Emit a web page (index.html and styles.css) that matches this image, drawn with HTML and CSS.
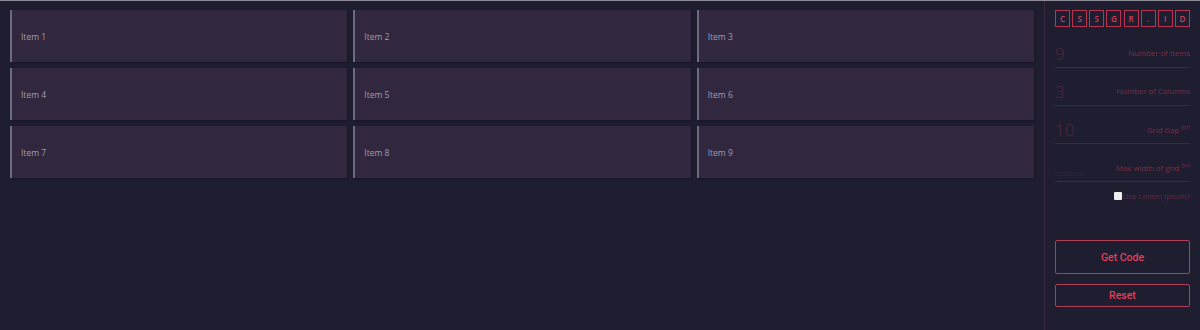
FILE: index.html
```html
<!DOCTYPE html>
<html lang="en">

<head>
    <meta charset="UTF-8">
    <meta name="viewport" content="width=device-width, initial-scale=1.0">
    <title>CSS Grid Generator</title>
    <link rel="stylesheet" href="styles.css">
</head>

<body>
    <div class="app">
        <div class="main">
            <div class="grid">
                <div class="item">Item 1</div>
                <div class="item">Item 2</div>
                <div class="item">Item 3</div>
                <div class="item">Item 4</div>
                <div class="item">Item 5</div>
                <div class="item">Item 6</div>
                <div class="item">Item 7</div>
                <div class="item">Item 8</div>
                <div class="item">Item 9</div>
            </div>
        </div>

        <div class="sidebar">
            <div class="logo">
                <span>C</span><span>S</span><span>S</span><span>G</span><span>R</span><span>.</span><span>I</span><span>D</span>
            </div>

            <div class="field">
                <span class="value">9</span>
                <label>Number of Items</label>
            </div>
            <div class="field">
                <span class="value">3</span>
                <label>Number of Columns</label>
            </div>
            <div class="field">
                <span class="value">10</span>
                <label>Grid Gap <sup>(px)</sup></label>
            </div>
            <div class="field">
                <span class="value placeholder">optional</span>
                <label>Max width of grid <sup>(px)</sup></label>
            </div>

            <div class="check">
                <span class="box"></span>
                <span>Use Lorem Ipsum?</span>
            </div>

            <div class="buttons">
                <button class="btn big">Get Code</button>
                <button class="btn">Reset</button>
            </div>
        </div>
    </div>
</body>

</html>
```

FILE: styles.css
```css
* {
    padding: 0;
    margin: 0;
    box-sizing: border-box;
}

body {
    background-color: #1f1e30;
    font-family: "Open Sans", sans-serif;
    border-top: 1px solid #8d8b98;
}

.app {
    display: flex;
    height: 329px;
}

.main {
    width: 1044px;
    padding: 9px 10px;
}

.grid {
    display: grid;
    grid-template-columns: repeat(3, 1fr);
    grid-auto-rows: 52px;
    gap: 6px;
}

.item {
    background-color: #31273f;
    border-left: 2px solid #6e6a7e;
    box-shadow: 1px 1px 2px rgba(20, 18, 32, .6);
    color: #a29cad;
    font-size: 8.5px;
    display: flex;
    align-items: center;
    padding-left: 9px;
}

.sidebar {
    flex: 1;
    border-left: 1px solid #40293f;
    padding: 9px 10px 0 10px;
    color: #6c2d45;
    font-family: "Open Sans", sans-serif;
}

.logo {
    display: flex;
    justify-content: space-between;
    margin-bottom: 3px;
}

.logo span {
    width: 15px;
    height: 17px;
    border: 1px solid #b8344e;
    color: #d03e58;
    font-size: 8px;
    font-weight: 600;
    display: flex;
    align-items: center;
    justify-content: center;
}

.field {
    display: flex;
    justify-content: space-between;
    align-items: center;
    height: 38px;
    padding-top: 9px;
    border-bottom: 1px solid #42283f;
}

.value {
    font-size: 17px;
    color: #55283f;
    font-weight: 300;
}

.value.placeholder {
    font-size: 8px;
    padding-top: 10px;
    color: #3e2a3e;
}

.field label {
    font-size: 7.8px;
    color: #742f49;
}

.field sup {
    font-size: 5px;
}

.check {
    display: flex;
    justify-content: flex-end;
    align-items: center;
    gap: 1px;
    font-size: 7.8px;
    margin-top: 9px;
    color: #602a42;
}

.check .box {
    width: 8px;
    height: 8px;
    background-color: #eeeeee;
    border-radius: 1px;
}

.buttons {
    margin-top: 39px;
    display: flex;
    flex-direction: column;
    gap: 10px;
}

.btn {
    background: transparent;
    border: 1px solid #b03f56;
    border-radius: 2px;
    color: #e63d58;
    font-family: Roboto, sans-serif;
    font-weight: 500;
    font-size: 10.5px;
    height: 23px;
}

.btn.big {
    height: 34px;
}
```
